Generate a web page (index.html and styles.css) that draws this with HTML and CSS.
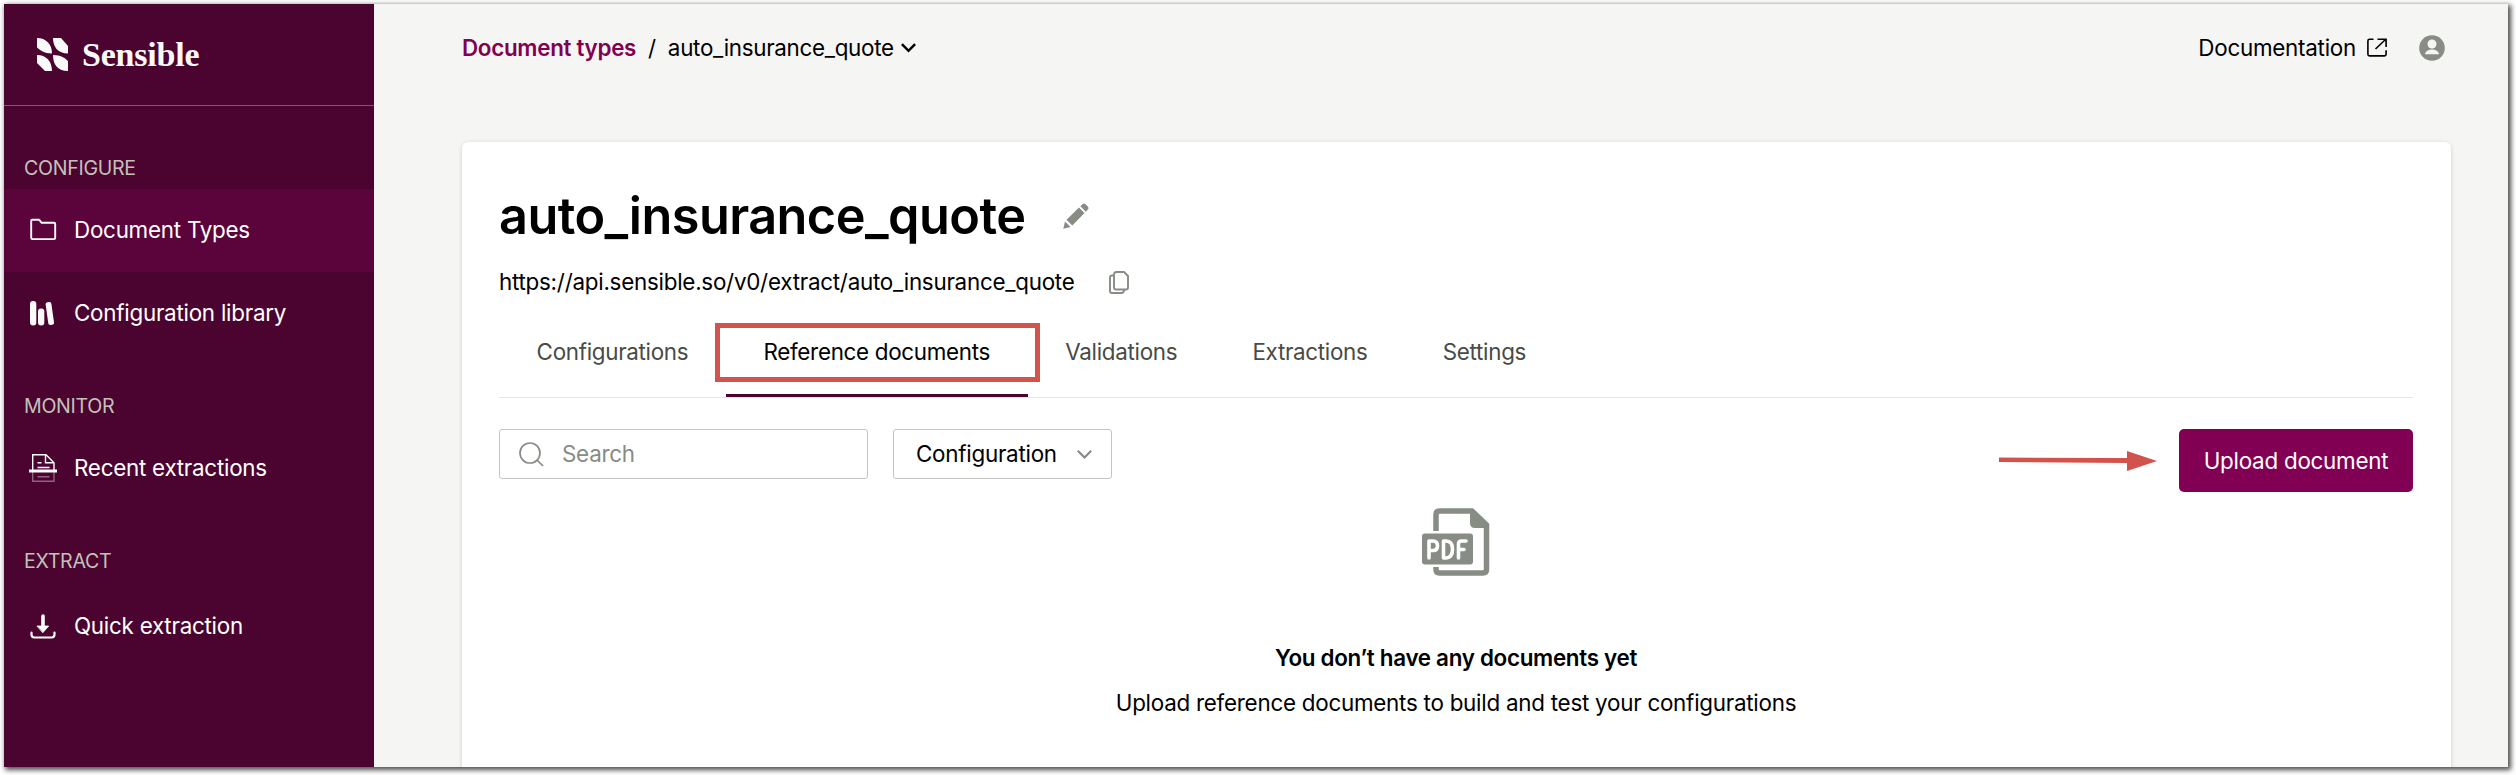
FILE: index.html
```html
<!DOCTYPE html>
<html lang="en">
<head>
<meta charset="utf-8">
<title>Sensible</title>
<link rel="stylesheet" href="styles.css">
</head>
<body>
<div class="window">
  <aside class="sidebar">
    <div class="brand">
      <svg class="brand-mark" viewBox="0 0 31 33" fill="#fafaf9"><path d="M0 0C9 0 15 6 15 15.500C7 15.500 3 12 0 9.500ZM16 0H24L31 8V15.500C21 15.500 16 9 16 0ZM0 17C9 17 15 23 15 33H8L0 25ZM16 17C24 17 28 20 31 23V33C21 33 16 27 16 17Z"/></svg>
      <span class="brand-name">Sensible</span>
    </div>
    <nav class="nav">
      <h2 class="nav-label">CONFIGURE</h2>
      <a class="nav-item active">
        <svg class="nav-icon" viewBox="0 0 28 28" fill="none" stroke="#fff" stroke-width="1.900" stroke-linejoin="round"><path d="M2.200 4.800q0-1 1-1h7l2.500 3h12.200q1.300 0 1.300 1.300v13.700q0 1.300-1.300 1.300H3.500q-1.300 0-1.300-1.300Z"/></svg>
        <span>Document Types</span>
      </a>
      <a class="nav-item">
        <svg class="nav-icon" viewBox="0 0 28 28" fill="#fafaf9"><rect x="1" y="2" width="6.300" height="24.500" rx="3"/><rect x="9" y="9.500" width="6.300" height="17" rx="3"/><rect x="18" y="3" width="5.800" height="23" rx="2" transform="rotate(-8 21 15)"/></svg>
        <span>Configuration library</span>
      </a>
      <h2 class="nav-label monitor">MONITOR</h2>
      <a class="nav-item">
        <svg class="nav-icon" viewBox="0 0 28 28" fill="none" stroke="#fff" stroke-width="1.400"><path d="M3.700 16V.700H17l8 8V16M16.500 .700v8h8.500M8.500 8.700h4M8.500 13.500h12"/><path d="M0 17H28" stroke-width="3"/><path d="M3.700 18v9.200H25V18M8.500 22.700h12" stroke-opacity=".38"/></svg>
        <span>Recent extractions</span>
      </a>
      <h2 class="nav-label extract">EXTRACT</h2>
      <a class="nav-item quick">
        <svg class="nav-icon" viewBox="0 0 28 28" fill="none" stroke="#fff" stroke-linecap="round"><path d="M14 4v11" stroke-width="3.600"/><path d="M8.300 14h11.400L14 20.500Z" fill="#fff" stroke-width=".8" stroke-linejoin="round"/><path d="M2.500 20.500v2q0 3 3 3h17q3 0 3-3v-2" stroke-width="2.200"/></svg>
        <span>Quick extraction</span>
      </a>
    </nav>
  </aside>
  <main class="main">
    <header class="topbar">
      <div class="crumbs">
        <a class="crumb-link">Document types</a>
        <span class="slash">/</span>
        <span>auto_insurance_quote</span>
        <svg class="crumb-chevron" viewBox="0 0 15 10" fill="none" stroke="#000" stroke-width="2.500"><path d="M.900 1.200 7.500 7.800 14.100 1.200"/></svg>
      </div>
      <div class="top-actions">
        <span>Documentation</span>
        <svg class="external" viewBox="0 0 20 20" fill="none" stroke="#000" stroke-width="1.600"><path d="M6.500 1.300H2.500Q.900 1.300.900 2.900V16.300Q.900 17.900 2.500 17.900H17.500Q19.100 17.900 19.100 16.300V12.300M8.500 11 18.500 1.500M10.500 1.300H19.100V9"/></svg>
        <svg class="avatar" viewBox="0 0 26 26"><circle cx="13" cy="13" r="12.800" fill="#878c85"/><circle cx="13" cy="9" r="4.500" fill="#f5f5f3"/><path d="M6 19.200C7 13 19 13 20 19.200Z" fill="#f5f5f3"/></svg>
      </div>
    </header>
    <section class="card">
      <div class="title-row">
        <h1 class="title">auto_insurance_quote</h1>
        <svg class="pencil" viewBox="0 0 26 26" fill="#878c85"><path d="M.300 25.700 2 18.500 7.500 24ZM3.500 16.700 16 4.500 21.500 10 9.300 22.500ZM17.300 3.200 19.700.900Q21 0 22.300 1L25 3.700Q26 5 25.100 6.300L22.800 8.700Z"/></svg>
      </div>
      <div class="url-row">
        <span>https://api.sensible.so/v0/extract/auto_insurance_quote</span>
        <svg class="copy" viewBox="0 0 20 23" fill="none" stroke="#878c85" stroke-width="1.900"><path d="M7.500 1H15L19 5V16.500Q19 18.500 17 18.500H7Q5 18.500 5 16.500V3.500Q5 1 7.500 1Z"/><path d="M4.500 4.500H3Q1 4.500 1 6.500V20Q1 22 3 22H12.500Q14.700 22 15.200 19"/></svg>
      </div>
      <div class="tabs">
        <div class="tab">Configurations</div>
        <div class="tab selected">Reference documents<span class="highlight"></span></div>
        <div class="tab">Validations</div>
        <div class="tab">Extractions</div>
        <div class="tab">Settings</div>
      </div>
      <div class="toolbar">
        <div class="search">
          <svg class="search-icon" viewBox="0 0 25 25" fill="none" stroke="#878c85" stroke-width="1.700"><circle cx="11" cy="11" r="10"/><path d="m18 18 6 6"/></svg>
          <span>Search</span>
        </div>
        <div class="select">
          <span>Configuration</span>
          <svg class="select-chevron" viewBox="0 0 15 9" fill="none" stroke="#878c85" stroke-width="2.200"><path d="M.800.800 7.500 7.500 14.200.800"/></svg>
        </div>
        <svg class="arrow" viewBox="0 0 158 20" fill="#d2534c"><path d="M0 6.500 128 7V0L158 10 128 20V12L0 11Z"/></svg>
        <button class="upload">Upload document</button>
      </div>
      <div class="empty">
        <svg class="pdf" viewBox="0 0 68 68"><path d="M14 23V6.500Q14 3 17.500 3H50L64.500 17V61.500Q64.500 65 61 65H17.500Q14 65 14 61.500V59" fill="none" stroke="#878c85" stroke-width="5.500"/><path d="M48 1H51L67 17V20H53Q48 20 48 15Z" fill="#878c85"/><rect x="0" y="25.500" width="51" height="31" rx="3" fill="#878c85"/><g fill="none" stroke="#fff" stroke-width="3.600" stroke-linecap="round" stroke-linejoin="round"><path d="M7 50V33H11Q15.500 33 15.500 37.700T11 42.500H7"/><path d="M21.500 33H24Q30.500 33 30.500 41.200T24 50H21.500Z"/><path d="M36.500 50V36Q36.500 33 39.500 33H44M36.500 41.500H42"/></g></svg>
        <p class="empty-title">You don’t have any documents yet</p>
        <p class="empty-text">Upload reference documents to build and test your configurations</p>
      </div>
    </section>
  </main>
</div>
</body>
</html>
```
FILE: styles.css
```css
* { box-sizing: border-box; margin: 0; padding: 0; }
body { height: 775px; padding: 4px 8px 8px 4px; overflow: hidden; background: #fff; font-family: Inter, "Liberation Sans", sans-serif; font-size: 22.4px; line-height: 32px; letter-spacing: -.25px; color: #000; }
svg { display: block; flex: none; }
span, a { white-space: nowrap; }
.window { display: flex; width: 2504px; height: 763px; background: #f5f5f3; box-shadow: 2px 2px 5px 1px rgba(0,0,0,.7); }
.sidebar { flex: none; width: 370px; background: #4b0430; color: #fff; }
.brand { display: flex; align-items: center; height: 102px; padding-left: 33px; border-bottom: 1px solid #8a5176; gap: 14px; }
.brand-mark { width: 31px; height: 33px; }
.brand-name { font-family: "Liberation Serif", serif; font-weight: 700; font-size: 34px; letter-spacing: -.2px; color: #fafaf9; }
.nav-label { height: 83px; padding: 46px 0 0 20px; font-size: 19.6px; font-weight: 400; line-height: 32px; letter-spacing: -.3px; color: #c3c2b9; }
.nav-label.monitor { height: 72px; padding-top: 35px; }
.nav-label.extract { padding-top: 35px; height: 75px; }
.nav-item { display: flex; align-items: center; gap: 17px; height: 83px; padding: 0 0 1px 25px; }
.nav-item.active { background: #5b033b; }
.nav-icon { width: 28px; height: 28px; }
.main { flex: 1; padding: 0 57px 0 88px; overflow: hidden; }
.topbar { display: flex; align-items: center; justify-content: space-between; height: 138px; padding: 0 6px 50px 0; }
.crumbs { display: flex; align-items: center; letter-spacing: -.3px; }
.crumb-link { font-weight: 600; color: #820054; }
.slash { margin: 0 12px; }
.crumb-chevron { width: 15px; height: 10px; margin-left: 7px; }
.top-actions { display: flex; align-items: center; }
.external { width: 20px; height: 20px; margin: 0 32px 0 11px; }
.avatar { width: 26px; height: 26px; }
.card { height: 640px; padding: 40px 38px 0 37px; background: #fff; border-radius: 6px; box-shadow: 0 1px 4px rgba(0,0,0,.16); }
.title-row { display: flex; align-items: center; gap: 38px; height: 68px; }
.title { font-size: 50.4px; line-height: 68px; font-weight: 600; letter-spacing: -.54px; }
.pencil { width: 26px; height: 26px; }
.url-row { display: flex; align-items: center; gap: 34px; margin-top: 16px; height: 32px; }
.copy { width: 20px; height: 23px; }
.tabs { display: flex; height: 90px; margin-top: 10px; border-bottom: 1px solid #e6e6e4; }
.tab { position: relative; height: 89px; padding: 28px 37.6px 0; letter-spacing: -.3px; color: #484b46; }
.tab.selected { color: #000; border-bottom: 3px solid #4b0430; }
.highlight { position: absolute; left: -11px; right: -12px; top: 15px; height: 59px; border: 5px solid #d2534c; }
.toolbar { display: flex; align-items: flex-start; margin-top: 31px; }
.search, .select { display: flex; align-items: center; height: 50px; border: 1px solid #c3c6c0; border-radius: 3px; }
.search { width: 369px; padding-left: 19px; gap: 18px; color: #878c85; }
.search-icon { width: 25px; height: 25px; }
.select { width: 219px; margin-left: 25px; padding: 0 19px 0 22px; justify-content: space-between; }
.select-chevron { width: 15px; height: 9px; }
.arrow { width: 158px; height: 20px; margin: 22px 22px 0 auto; }
.upload { width: 234px; height: 63px; border: 0; border-radius: 5px; background: #820054; color: #fff; font: inherit; letter-spacing: inherit; }
.empty { display: flex; flex-direction: column; align-items: center; padding-top: 16px; }
.pdf { width: 68px; height: 68px; }
.empty-title { margin-top: 66px; font-weight: 600; letter-spacing: -.3px; }
.empty-text { margin-top: 13px; }
```
